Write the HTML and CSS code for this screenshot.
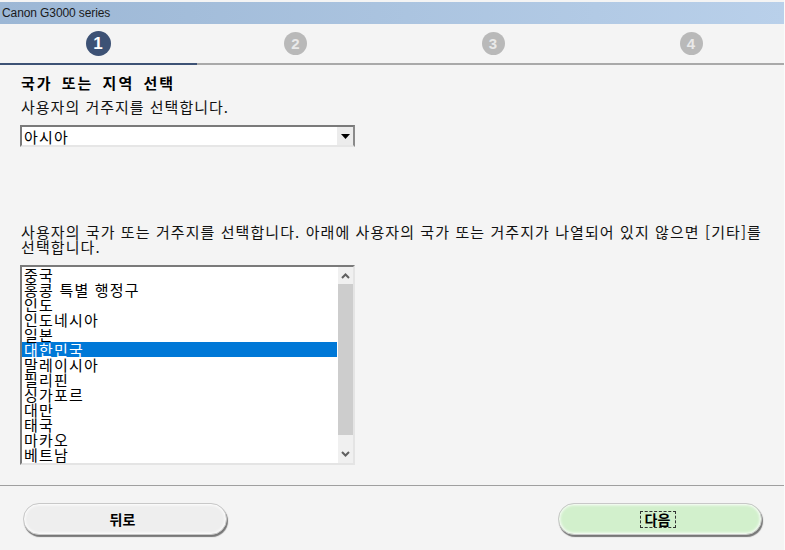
FILE: index.html
```html
<!DOCTYPE html>
<html lang="ko">
<head>
    <meta charset="UTF-8">
    <meta name="viewport" content="width=device-width, initial-scale=1.0">
    <title>Canon G3000 series</title>
    <link rel="stylesheet" href="styles.css">
</head>
<body>
    <div class="window">
        <header class="titlebar">Canon G3000 series</header>
        <nav class="steps">
            <div class="step active"><span class="step-num">1</span></div>
            <div class="step"><span class="step-num">2</span></div>
            <div class="step"><span class="step-num">3</span></div>
            <div class="step"><span class="step-num">4</span></div>
        </nav>
        <section class="content">
            <h1 class="heading">국가 또는 지역 선택</h1>
            <p class="desc">사용자의 거주지를 선택합니다.</p>
            <div class="combo">
                <span class="combo-value">아시아</span>
                <span class="combo-arrow"><svg width="9" height="5" viewBox="0 0 9 5"><path d="M0 0h9L4.5 5z" fill="#000"/></svg></span>
            </div>
            <p class="desc-long">사용자의 국가 또는 거주지를 선택합니다. 아래에 사용자의 국가 또는 거주지가 나열되어 있지 않으면 [기타]를 선택합니다.</p>
            <div class="listbox">
                <ul class="list">
                    <li>중국</li>
                    <li>홍콩 특별 행정구</li>
                    <li>인도</li>
                    <li>인도네시아</li>
                    <li>일본</li>
                    <li class="selected">대한민국</li>
                    <li>말레이시아</li>
                    <li>필리핀</li>
                    <li>싱가포르</li>
                    <li>대만</li>
                    <li>태국</li>
                    <li>마카오</li>
                    <li>베트남</li>
                    <li>기타</li>
                </ul>
                <div class="scrollbar">
                    <svg class="scroll-btn" width="15" height="17" viewBox="0 0 15 17"><path d="M4 11l3.500-3.500L11 11" fill="none" stroke="#606060" stroke-width="2"/></svg>
                    <div class="scroll-track"><div class="scroll-thumb"></div></div>
                    <svg class="scroll-btn" width="15" height="17" viewBox="0 0 15 17"><path d="M4 6l3.500 3.500L11 6" fill="none" stroke="#606060" stroke-width="2"/></svg>
                </div>
            </div>
        </section>
        <footer class="actions">
            <button class="btn">뒤로</button>
            <button class="btn btn-next"><span class="btn-focus">다음</span></button>
        </footer>
    </div>
</body>
</html>
```

FILE: styles.css
```css
html, body {
    margin: 0;
    padding: 0;
    height: 100%;
    overflow: hidden;
}
body {
    background: #f4f4f4;
    color: #000;
    font-family: "Noto Sans CJK KR", "Noto Sans", sans-serif;
}
.window {
    height: 550px;
    display: flex;
    flex-direction: column;
    padding-top: 2px;
    box-sizing: border-box;
    border-right: 1px solid #fbfbfb;
    overflow: hidden;
}
.titlebar {
    height: 22px;
    line-height: 22px;
    padding-left: 2px;
    background: linear-gradient(90deg, #9cb7d5, #b9d0ea);
    color: #1a1a1a;
    font-family: "Liberation Sans", sans-serif;
    font-size: 12px;
    letter-spacing: -0.1px;
    flex: none;
}
.steps {
    display: grid;
    grid-template-columns: 197px 197px 198px 198px;
    height: 41px;
    flex: none;
}
.step {
    display: flex;
    justify-content: center;
    align-items: center;
    height: 39px;
    border-bottom: 2px solid #a9a9a9;
}
.step.active {
    padding-right: 1px;
    border-bottom-color: #3d5275;
}
.step-num {
    width: 23px;
    height: 23px;
    border-radius: 50%;
    background: #b9b9b9;
    color: #e9e9e9;
    display: flex;
    justify-content: center;
    align-items: center;
    font-family: "Liberation Sans", sans-serif;
    font-size: 15px;
    font-weight: bold;
}
.step.active .step-num {
    width: 25px;
    height: 25px;
    background: #3d5275;
    color: #fff;
    font-size: 17px;
}
.content {
    padding: 7px 0 0 21px;
    flex: 1;
}
.heading {
    margin: 0;
    height: 21px;
    line-height: 21px;
    font-size: 15px;
    font-weight: bold;
    letter-spacing: 2px;
    word-spacing: 3px;
}
.desc {
    margin: 4px 0 0;
    height: 20px;
    line-height: 20px;
    font-size: 15px;
    letter-spacing: 1px;
    color: #111;
}
.combo {
    margin: 8px 0 0 -1px;
    width: 335px;
    height: 22px;
    box-sizing: border-box;
    border: 2px solid #7a7a7a;
    border-right-color: #8a8a8a;
    border-bottom-color: #e6e6e6;
    background: #fff;
    display: flex;
    justify-content: space-between;
    align-items: center;
}
.combo-value {
    padding-left: 2px;
    font-size: 15px;
    letter-spacing: 1.2px;
}
.combo-arrow {
    width: 16px;
    height: 18px;
    background: #ececec;
    display: flex;
    justify-content: center;
    align-items: center;
}
.desc-long {
    margin: 77px 0 0;
    width: 750px;
    font-size: 15px;
    line-height: 15px;
    letter-spacing: 1.08px;
    color: #111;
}
.listbox {
    margin: 11px 0 0 -1px;
    width: 335px;
    height: 200px;
    box-sizing: border-box;
    border: 2px solid #7a7a7a;
    border-right: 2px solid #e4e4e4;
    border-bottom-color: #e4e4e4;
    background: #fff;
    display: flex;
    overflow: hidden;
}
.list {
    list-style: none;
    margin: 0;
    padding: 0;
    flex: 1;
}
.list li {
    height: 15px;
    line-height: 15px;
    padding-left: 2px;
    font-size: 15px;
    letter-spacing: 1.2px;
    white-space: nowrap;
}
.list li.selected {
    background: #0078d7;
    color: #fff;
}
.scrollbar {
    width: 15px;
    margin-left: 1px;
    background: #f0f0f0;
    display: flex;
    flex-direction: column;
    flex: none;
}
.scroll-btn {
    display: block;
    flex: none;
}
.scroll-track {
    flex: 1;
}
.scroll-thumb {
    height: 151px;
    background: #cdcdcd;
}
.actions {
    flex: none;
    height: 65px;
    box-sizing: border-box;
    border-top: 1px solid #9f9f9f;
    padding: 17px 22px 0 23px;
    display: flex;
    justify-content: space-between;
    align-items: flex-start;
}
.btn {
    width: 204px;
    height: 32px;
    padding: 0 5px 0 0;
    border: 1px solid #c8c8c8;
    border-radius: 16px;
    background: #eeeeee;
    box-shadow: 1px 2px 1px #777, inset 0 0 3px 1px #fff;
    font-family: inherit;
    font-size: 14px;
    font-weight: bold;
    color: #000;
}
.btn-next {
    background: #d2f0cc;
}
.btn-focus {
    display: inline-block;
    width: 34px;
    height: 15px;
    line-height: 15px;
    border: 1px dashed #333;
}
```
